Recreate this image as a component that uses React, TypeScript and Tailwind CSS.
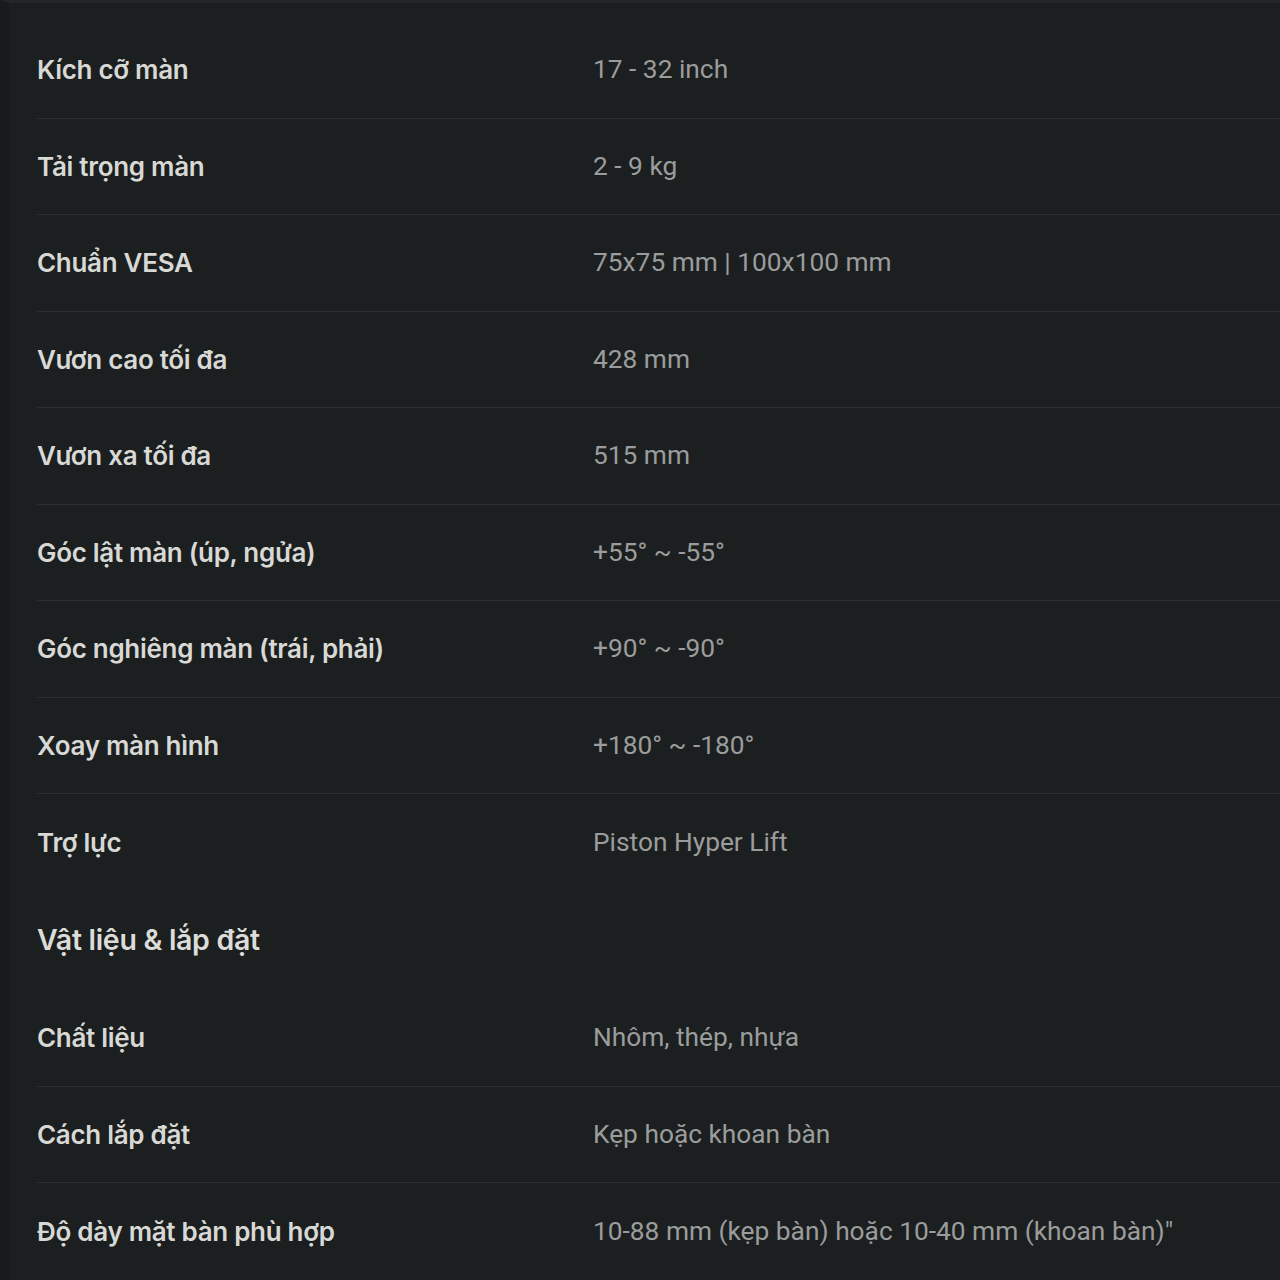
type Spec = { label: string; value?: string; heading?: boolean };

const specs: Spec[] = [
  { label: "Kích cỡ màn", value: "17 - 32 inch" },
  { label: "Tải trọng màn", value: "2 - 9 kg" },
  { label: "Chuẩn VESA", value: "75x75 mm | 100x100 mm" },
  { label: "Vươn cao tối đa", value: "428 mm" },
  { label: "Vươn xa tối đa", value: "515 mm" },
  { label: "Góc lật màn (úp, ngửa)", value: "+55° ~ -55°" },
  { label: "Góc nghiêng màn (trái, phải)", value: "+90° ~ -90°" },
  { label: "Xoay màn hình", value: "+180° ~ -180°" },
  { label: "Trợ lực", value: "Piston Hyper Lift" },
  { label: "Vật liệu & lắp đặt", heading: true },
  { label: "Chất liệu", value: "Nhôm, thép, nhựa" },
  { label: "Cách lắp đặt", value: "Kẹp hoặc khoan bàn" },
  { label: "Độ dày mặt bàn phù hợp", value: "10-88 mm (kẹp bàn) hoặc 10-40 mm (khoan bàn)\"" },
];

export default function App() {
  return (
    <div className="min-h-[1280px] w-[1280px] overflow-hidden bg-[#1c1f20] border-l-[9px] border-l-[#181b1c] border-t-[3px] border-t-[#222627]">
      <div className="pl-[28px] pt-[19px]">
        {specs.map((s, i) => {
          const next = specs[i + 1];
          const line = !s.heading && next && !next.heading;
          if (s.heading) {
            return (
              <div key={i} className="h-[99.5px] flex items-center">
                <p className="font-['Inter',sans-serif] font-semibold text-[28.5px] tracking-[-0.3px] text-[#dcdcd8]">{s.label}</p>
              </div>
            );
          }
          return (
            <div
              key={i}
              className={
                line
                  ? "h-[96.5px] flex items-center border-b border-[#2c3031]"
                  : "h-[96.5px] flex items-center"
              }
            >
              <p className="w-[556px] shrink-0 font-['Inter',sans-serif] font-semibold text-[26px] tracking-[-0.3px] text-[#d8d8d5]">{s.label}</p>
              <p className="font-['Roboto',sans-serif] text-[26.3px] text-[#9b9c9c] whitespace-nowrap">{s.value}</p>
            </div>
          );
        })}
      </div>
    </div>
  );
}
